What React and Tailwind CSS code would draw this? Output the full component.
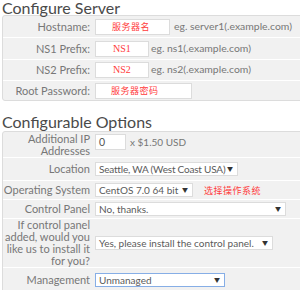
import React from "react";

const font = { fontFamily: "'Lato', 'Noto Sans CJK SC', sans-serif" };
const cjk = { fontFamily: "'Noto Sans CJK SC', sans-serif" };
const serif = { fontFamily: "'Liberation Serif', serif" };

function Select({ text, w, focus, tight }) {
  return (
    <div
      className={`flex items-center justify-between h-[14px] bg-white border ${focus ? "border-[#86aee6]" : "border-[#dcdcdc]"} pl-[3px] pr-[4px] text-[10px] leading-none text-[#5a5a5a] whitespace-nowrap overflow-hidden ${w}`}
    >
      <span className={tight ? "tracking-[-0.2px]" : ""}>{text}</span>
      <span className="text-[6px] text-[#333] leading-none">▼</span>
    </div>
  );
}

function Row({ label, children, h, first, align = "items-center" }) {
  return (
    <div className={`flex ${h} ${first ? "" : "border-t border-white"}`}>
      <div className="w-[90px] shrink-0 flex items-center justify-end text-right pr-[3px] text-[11px] leading-[12px] text-[#777]">
        {label}
      </div>
      <div className={`flex ${align} pl-[2px] text-[#777] whitespace-nowrap`}>
        {children}
      </div>
    </div>
  );
}

function Input({ w, children, cls = "" }) {
  return (
    <div className={`h-[16px] bg-white border border-[#dcdcdc] flex items-center ${w} ${cls}`}>
      {children}
    </div>
  );
}

export default function App() {
  return (
    <div className="w-[300px] h-[290px] overflow-hidden bg-white" style={font}>
      <div className="pl-[2px] text-[16px] leading-[16px] text-[#4a4a4a] whitespace-nowrap">Configure Server</div>
      <div className="ml-[2px] w-[330px] border border-[#dcdcdc] rounded-[3px] bg-[#f1f1f1] mt-[-1px]">
        <Row label="Hostname:" h="h-[21px]" first>
          <Input w="w-[75px]" cls="pl-[16px]">
            <span className="text-[9px] leading-none text-[#ff3b3b] tracking-[0.5px]" style={cjk}>服务器名</span>
          </Input>
          <span className="ml-[4px] text-[10.4px]">eg. server1(.example.com)</span>
        </Row>
        <Row label="NS1 Prefix:" h="h-[22px]">
          <Input w="w-[54px]" cls="pl-[17px]">
            <span className="text-[10px] leading-none text-[#ff3b3b]" style={serif}>NS1</span>
          </Input>
          <span className="ml-[2px] text-[10.4px]">eg. ns1(.example.com)</span>
        </Row>
        <Row label="NS2 Prefix:" h="h-[21px]">
          <Input w="w-[54px]" cls="pl-[17px]">
            <span className="text-[10px] leading-none text-[#ff3b3b]" style={serif}>NS2</span>
          </Input>
          <span className="ml-[2px] text-[10.4px]">eg. ns2(.example.com)</span>
        </Row>
        <Row label="Root Password:" h="h-[20px]">
          <Input w="w-[97px]" cls="pl-[15px]">
            <span className="text-[9px] leading-none text-[#ff3b3b] tracking-[0.5px]" style={cjk}>服务器密码</span>
          </Input>
        </Row>
      </div>

      <div className="pl-[2px] mt-[13px] text-[16px] leading-[16px] text-[#4a4a4a] whitespace-nowrap">Configurable Options</div>
      <div className="ml-[2px] w-[330px] border border-[#dcdcdc] rounded-[3px] bg-[#f1f1f1] mt-[1px] h-[170px]">
        <Row label={<span>Additional IP<br />Addresses</span>} h="h-[25px]" first align="items-start pt-[2px]">
          <Input w="w-[31px]" cls="pl-[3px]">
            <span className="text-[10.5px] leading-none text-[#555]">0</span>
          </Input>
          <span className="ml-[4px] mt-[2px] text-[10px] leading-[12px]">x $1.50 USD</span>
        </Row>
        <Row label="Location" h="h-[23px]">
          <Select text="Seattle, WA (West Coast USA)" w="w-[143px]" tight />
        </Row>
        <Row label="Operating System" h="h-[19px]">
          <Select text="CentOS 7.0 64 bit" w="w-[98px]" />
          <span className="ml-[11px] text-[9px] leading-none text-[#ff3b3b] tracking-[0.5px]" style={cjk}>选择操作系统</span>
        </Row>
        <Row label="Control Panel" h="h-[19px]">
          <Select text="No, thanks." w="w-[191px]" />
        </Row>
        <Row label={<span>If control panel<br />added, would you<br />like us to install it<br />for you?</span>} h="h-[49px]">
          <Select text="Yes, please install the control panel." w="w-[178px]" />
        </Row>
        <Row label="Management" h="h-[24px]" align="items-start pt-[5px]">
          <Select text="Unmanaged" w="w-[130px]" focus />
        </Row>
      </div>
    </div>
  );
}
